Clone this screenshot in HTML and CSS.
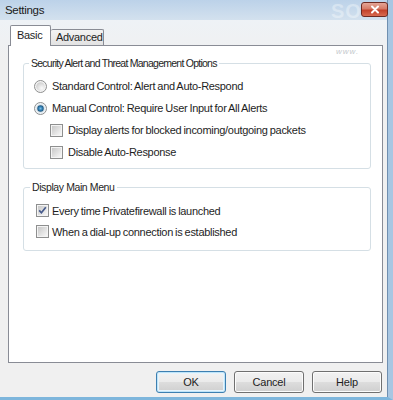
FILE: index.html
```html
<!DOCTYPE html>
<html>
<head>
<meta charset="utf-8">
<link rel="stylesheet" href="styles.css">
</head>
<body>
<div class="window">
  <div class="titlebar">
    <span class="title">Settings</span>
    <span class="wm-so">SO</span>
    <span class="close"><svg width="14" height="9" viewBox="0 0 14 9"><path d="M4 1.5 L10 7.5 M10 1.5 L4 7.5" stroke="#fff" stroke-width="2" stroke-linecap="round"/></svg></span>
  </div>
  <div class="body">
    <span class="wm-www">www.</span>
    <div class="tabs">
      <div class="tab active">Basic</div>
      <div class="tab">Advanced</div>
    </div>
    <div class="panel">
      <fieldset class="group g1">
        <legend>Security Alert and Threat Management Options</legend>
        <div class="row">
          <svg class="ctl" width="13" height="13" viewBox="0 0 13 13"><defs><radialGradient id="ru" cx="0.65" cy="0.7" r="0.8"><stop offset="0" stop-color="#fbfbfb"/><stop offset="1" stop-color="#c9c9c9"/></radialGradient></defs><circle cx="6.5" cy="6.5" r="6" fill="#f3f3f3" stroke="#8e8f8f"/><circle cx="6.5" cy="6.5" r="4.3" fill="url(#ru)"/></svg>
          <span>Standard Control: Alert and Auto-Respond</span>
        </div>
        <div class="row">
          <svg class="ctl" width="13" height="13" viewBox="0 0 13 13"><defs><radialGradient id="rc" cx="0.5" cy="0.5" r="0.6"><stop offset="0" stop-color="#7cc0e6"/><stop offset="0.5" stop-color="#2f7bb0"/><stop offset="1" stop-color="#12405f"/></radialGradient></defs><circle cx="6.5" cy="6.5" r="6" fill="#eef3f7" stroke="#8e8f8f"/><circle cx="6.5" cy="6.5" r="4.3" fill="#d6e2ea"/><circle cx="6.5" cy="6.5" r="3.2" fill="url(#rc)"/></svg>
          <span>Manual Control: Require User Input for All Alerts</span>
        </div>
        <div class="row sub">
          <svg class="ctl" width="13" height="13" viewBox="0 0 13 13"><defs><linearGradient id="cu" x1="0" y1="0" x2="1" y2="1"><stop offset="0" stop-color="#c8c8c8"/><stop offset="1" stop-color="#f7f7f7"/></linearGradient></defs><rect x="0.5" y="0.5" width="12" height="12" fill="#f4f4f4" stroke="#8e8f8f"/><rect x="2" y="2" width="9" height="9" fill="url(#cu)"/></svg>
          <span>Display alerts for blocked incoming/outgoing packets</span>
        </div>
        <div class="row sub">
          <svg class="ctl" width="13" height="13" viewBox="0 0 13 13"><rect x="0.5" y="0.5" width="12" height="12" fill="#f4f4f4" stroke="#8e8f8f"/><rect x="2" y="2" width="9" height="9" fill="url(#cu)"/></svg>
          <span>Disable Auto-Response</span>
        </div>
      </fieldset>
      <fieldset class="group g2">
        <legend>Display Main Menu</legend>
        <div class="row">
          <svg class="ctl" width="13" height="13" viewBox="0 0 13 13"><rect x="0.5" y="0.5" width="12" height="12" fill="#f4f4f4" stroke="#8e8f8f"/><rect x="2" y="2" width="9" height="9" fill="url(#cu)"/><path d="M3.2 6.4 L5.4 8.8 L9.8 3.2" fill="none" stroke="#465a8c" stroke-width="1.7"/></svg>
          <span>Every time Privatefirewall is launched</span>
        </div>
        <div class="row">
          <svg class="ctl" width="13" height="13" viewBox="0 0 13 13"><rect x="0.5" y="0.5" width="12" height="12" fill="#f4f4f4" stroke="#8e8f8f"/><rect x="2" y="2" width="9" height="9" fill="url(#cu)"/></svg>
          <span>When a dial-up connection is established</span>
        </div>
      </fieldset>
    </div>
    <div class="buttons">
      <button class="btn default">OK</button>
      <button class="btn">Cancel</button>
      <button class="btn">Help</button>
    </div>
  </div>
</div>
</body>
</html>
```
FILE: styles.css
```css
* { box-sizing: border-box; }
html, body { margin: 0; padding: 0; }
body {
  width: 393px;
  height: 400px;
  overflow: hidden;
  font-family: "Liberation Sans", Arial, sans-serif;
  font-size: 11px;
  letter-spacing: -0.3px;
  word-spacing: -0.6px;
  color: #1e1e1e;
  background: #f0f0f0;
}
.window {
  width: 393px;
  height: 400px;
  display: flex;
  flex-direction: column;
  position: relative;
  border-right: 5px solid #a8c6e2;
  border-bottom: 3px solid #7eb6dc;
}
.titlebar {
  height: 20px;
  flex: none;
  display: flex;
  align-items: center;
  padding-left: 5px;
  background: linear-gradient(#bcd2e9, #d3e1ee);
  border-right: 1px solid #6f8fb0;
  position: relative;
}
.title { font-size: 11.5px; color: #1a1a1a; }
.wm-so {
  position: absolute;
  left: 331px;
  top: 0px;
  font-size: 20px;
  font-weight: bold;
  color: rgba(255,255,255,0.35);
  letter-spacing: 1px;
}
.wm-www {
  position: absolute;
  left: 336px;
  top: 27px;
  font-size: 8px;
  font-style: italic;
  color: #c4c8cc;
  letter-spacing: 1px;
}
.close {
  position: absolute;
  left: 361px;
  top: 2px;
  width: 27px;
  height: 15px;
  border: 1px solid #6d2a22;
  border-radius: 3px;
  background: linear-gradient(#e4a596 0%, #d67a66 45%, #c2412a 55%, #d86a50 100%);
  display: flex;
  align-items: center;
  justify-content: center;
}
.body {
  flex: 1;
  display: flex;
  flex-direction: column;
  padding: 5px 4px 4px 8px;
  background: linear-gradient(#eef2f6, #f0f0f0 40px);
  border-right: 1px solid #6f8fb0;
  position: relative;
}
.tabs {
  display: flex;
  align-items: flex-end;
  padding-left: 2px;
  height: 20px;
}
.tab {
  height: 16px;
  width: 53px;
  padding: 0 0 0 5px;
  border: 1px solid #898c95;
  border-bottom: none;
  border-left: none;
  border-radius: 2px 2px 0 0;
  background: linear-gradient(#f3f3f3, #e2e2e2);
  line-height: 15px;
  color: #1e1e1e;
}
.tab.active {
  height: 21px;
  width: 41px;
  padding: 0 0 0 6px;
  border-left: 1px solid #898c95;
  background: #fff;
  margin-bottom: -1px;
  position: relative;
  z-index: 1;
  line-height: 18px;
}
.panel {
  height: 318px;
  flex: none;
  background: #fff;
  border: 1px solid #898c95;
  padding: 10px 11px 0 14px;
  display: flex;
  flex-direction: column;
}
.group {
  margin: 0;
  border: 1px solid #d5dfe5;
  border-radius: 3px;
  padding: 4px 0 5px 10px;
}
.group legend {
  margin-left: -5px;
  padding: 0 2px;
  line-height: 15px;
  font-size: 10.5px;
  letter-spacing: -0.75px;
  word-spacing: 0;
}
.g2 {
  margin-top: 11px;
  padding: 5px 0 8px 12px;
}
.g2 legend { margin-left: -6px; letter-spacing: -0.4px; }
.row {
  display: flex;
  align-items: center;
  height: 22px;
  gap: 5px;
}
.g2 .row { height: 21px; gap: 3px; }
.row.sub { padding-left: 16px; }
.ctl { flex: none; display: block; }
.buttons {
  display: flex;
  justify-content: flex-end;
  gap: 8px;
  margin-top: 8px;
  padding-right: 1px;
}
.btn {
  width: 70px;
  height: 22px;
  font-family: "Liberation Sans", Arial, sans-serif;
  font-size: 11px;
  letter-spacing: -0.2px;
  color: #1e1e1e;
  border: 1px solid #707070;
  border-radius: 3px;
  background: linear-gradient(#f2f2f2 0%, #ebebeb 48%, #dddddd 52%, #cfcfcf 100%);
  box-shadow: inset 0 0 0 1px #fcfcfc;
  padding: 0;
}
.btn.default {
  border-color: #3c7fb1;
  box-shadow: inset 0 0 0 1px #bfe4f8, inset 0 0 0 2px #e6f4fc;
}
```
